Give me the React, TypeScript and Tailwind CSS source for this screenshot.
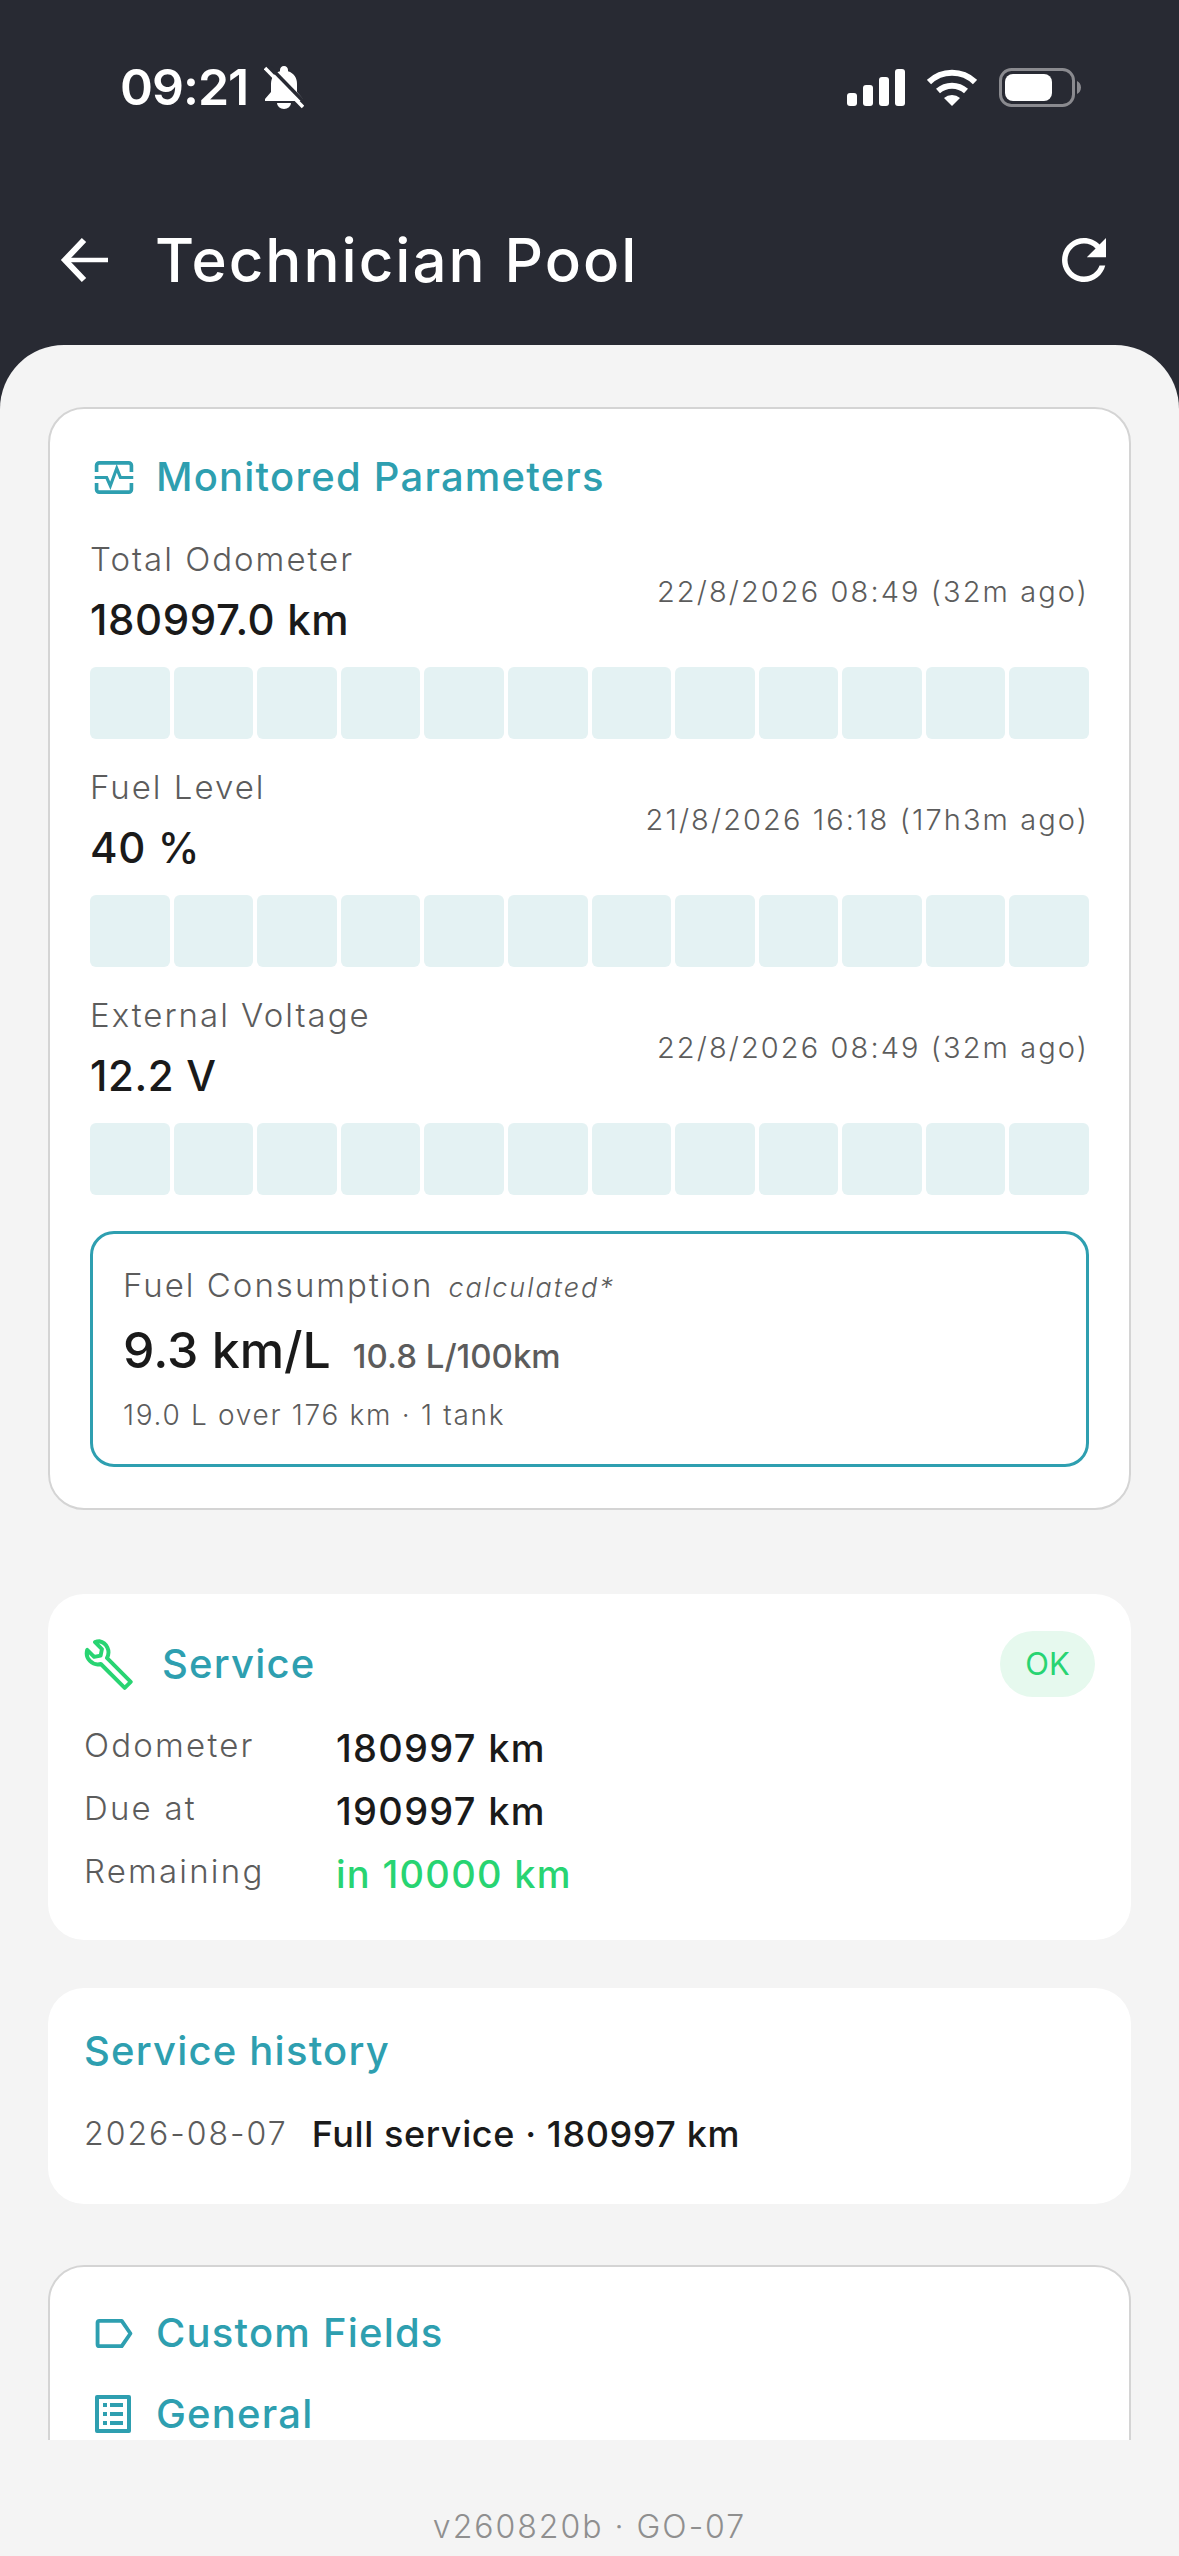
import { ReactNode } from "react";

const font = "font-['Inter','Liberation_Sans',sans-serif]";

const Bars = () => (
    <div className="grid grid-cols-12 gap-1 mt-[20px] h-[72px]">
        {Array.from({ length: 12 }).map((_, i) => (
            <div key={i} className="bg-[#e4f2f3] rounded-md" />
        ))}
    </div>
);

const Param = ({ label, value, time }: { label: string; value: string; time: string }) => (
    <div className="mb-[26px]">
        <div className="flex justify-between items-center">
            <div>
                <div className="text-[33px] leading-[44px] font-light text-[#5c5c5c] tracking-[2px]">{label}</div>
                <div className="text-[42px] leading-[54px] mt-[12px] font-medium text-[#1a1a1a] tracking-[0.6px]">{value}</div>
            </div>
            <div className="text-[29px] font-light text-[#5c5c5c] tracking-[2.1px]">{time}</div>
        </div>
        <Bars />
    </div>
);

const SectionTitle = ({ children }: { children: ReactNode }) => (
    <span className="text-[40px] font-medium text-[#2e9fb0] tracking-[1.2px]">{children}</span>
);

const Row = ({ label, children }: { label: string; children: ReactNode }) => (
    <div className="flex items-center h-[63px]">
        <div className="w-[252px] text-[33px] font-light text-[#5c5c5c] tracking-[2.2px] -mt-[6px]">{label}</div>
        {children}
    </div>
);

const ValueText = ({ children, green }: { children: ReactNode; green?: boolean }) => (
    <span className={`text-[38px] font-medium tracking-[1.3px] ${green ? "text-[#28d472]" : "text-[#1a1a1a]"}`}>{children}</span>
);

const App = () => {
    return (
        <div className={`${font} w-[1179px] h-[2556px] bg-[#282a33] flex flex-col overflow-hidden`}>
            {/* status bar + title */}
            <div className="h-[345px] shrink-0 text-white">
                <div className="flex justify-between items-center h-[174px] pl-[120px] pr-[98px]">
                    <div className="flex items-center gap-[16px]">
                        <span className="text-[50px] font-semibold tracking-[-1px]">09:21</span>
                        <svg width="40" height="43" viewBox="0 0 40 43" fill="white">
                            <path d="M20 0c2.5 0 4 1.8 4 4v1.2C30 7 33 12 33 18v8l6 7v2H1v-2l6-7v-8c0-6 3-11 9-12.800V4c0-2.200 1.500-4 4-4z" />
                            <path d="M13 37h14a7 6 0 0 1-14 0z" />
                            <path d="M4 -1 43 39" stroke="#282a33" strokeWidth="3.500" />
                            <path d="M1 2 39 41" stroke="white" strokeWidth="3.500" />
                        </svg>
                    </div>
                    <div className="flex items-center gap-[22px]">
                        <svg width="58" height="37" viewBox="0 0 58 37" fill="white">
                            <rect x="0" y="24" width="10" height="13" rx="3" />
                            <rect x="16" y="16" width="10" height="21" rx="3" />
                            <rect x="32" y="8" width="10" height="29" rx="3" />
                            <rect x="48" y="0" width="10" height="37" rx="3" />
                        </svg>
                        <svg width="50" height="37" viewBox="0 0 50 37" fill="none" stroke="white" strokeWidth="6">
                            <path d="M2 13a33 33 0 0 1 46 0" />
                            <path d="M11 22a21 21 0 0 1 28 0" />
                            <path d="M25 37 17 29a12 12 0 0 1 16 0z" fill="white" stroke="none" />
                        </svg>
                        <svg width="82" height="39" viewBox="0 0 82 39">
                            <rect x="1.500" y="1.500" width="73" height="36" rx="11" fill="none" stroke="#8a8a8f" strokeWidth="3" />
                            <rect x="6" y="6" width="47" height="27" rx="8" fill="white" />
                            <path d="M78 13c2 1 4 3 4 6.500s-2 5.500-4 6.500z" fill="#8a8a8f" />
                        </svg>
                    </div>
                </div>
                <div className="flex items-center mt-[31px] pl-[58px] pr-[62px] h-[110px]">
                    <svg width="52" height="52" viewBox="0 0 52 52" fill="none" stroke="white">
                        <path d="M50 26H8" strokeWidth="4.500" />
                        <path d="M26 6 7 26l19 20" strokeWidth="6" />
                    </svg>
                    <span className="ml-[45px] text-[60px] font-medium tracking-[2px]">Technician Pool</span>
                    <svg className="ml-auto" width="66" height="66" viewBox="0 0 24 24" fill="white">
                        <path d="M17.65 6.35C16.2 4.9 14.21 4 12 4c-4.42 0-7.99 3.58-7.99 8s3.57 8 7.99 8c3.73 0 6.84-2.55 7.73-6h-2.08c-.82 2.33-3.04 4-5.65 4-3.31 0-6-2.69-6-6s2.69-6 6-6c1.66 0 3.14.69 4.22 1.78L13 11h7V4l-2.35 2.35z" />
                    </svg>
                </div>
            </div>

            {/* content */}
            <div className="flex-1 bg-[#f4f4f4] rounded-t-[64px] flex flex-col">
                <div className="h-[2095px] shrink-0 overflow-hidden px-[48px] pt-[62px]">
                    <div className="bg-white border-2 border-[#d4d4d4] rounded-[36px] pt-[40px] px-[40px] pb-[41px]">
                        <div className="flex items-center gap-[22px] h-[56px] pl-[4px] mb-[32px]">
                            <svg width="40" height="33" viewBox="0 0 42 36" fill="none" stroke="#2e9fb0" strokeWidth="4">
                                <path d="M2 12V5a3 3 0 0 1 3-3h32a3 3 0 0 1 3 3v7M2 24v7a3 3 0 0 0 3 3h32a3 3 0 0 0 3-3v-7" />
                                <path d="M0 18h13l4 9 7-19 4 10h14" strokeWidth="3.400" />
                            </svg>
                            <SectionTitle>Monitored Parameters</SectionTitle>
                        </div>
                        <Param label="Total Odometer" value="180997.0 km" time="22/8/2026 08:49 (32m ago)" />
                        <Param label="Fuel Level" value="40 %" time="21/8/2026 16:18 (17h3m ago)" />
                        <Param label="External Voltage" value="12.2 V" time="22/8/2026 08:49 (32m ago)" />
                        <div className="border-[3px] border-[#2e9fb0] rounded-[24px] h-[236px] px-[30px] pt-[29px] mt-[36px]">
                            <div className="flex items-baseline gap-[15px] h-[44px]">
                                <span className="text-[33px] leading-[44px] font-light text-[#5c5c5c] tracking-[2px]">Fuel Consumption</span>
                                <span className="text-[27px] font-light italic text-[#5c5c5c] tracking-[2px]">calculated*</span>
                            </div>
                            <div className="flex items-baseline gap-[22px] mt-[12px] h-[62px]">
                                <span className="text-[50px] leading-[62px] font-medium text-[#1a1a1a]">9.3 km/L</span>
                                <span className="text-[33px] font-medium text-[#5c5c5c]">10.8 L/100km</span>
                            </div>
                            <div className="text-[28px] leading-[40px] font-light text-[#5c5c5c] mt-[14px] tracking-[1.7px]">19.0 L over 176 km · 1 tank</div>
                        </div>
                    </div>

                    <div className="bg-white rounded-[36px] h-[346px] mt-[84px] px-[36px] pt-[36px]">
                        <div className="flex items-center h-[68px] mb-[19px]">
                            <svg width="52" height="52" viewBox="0 0 24 24" fill="none" stroke="#28d472" strokeWidth="1.800" strokeLinejoin="round" className="-ml-[2px]">
                                <path d="M8 1.500a5 5 0 0 0-2 .4l3.200 3.200-.6 3-3 .6L2.400 5.500A5.200 5.200 0 0 0 8.700 12l11 11 2.800-2.800-11-11A5.200 5.200 0 0 0 8 1.500z" />
                            </svg>
                            <span className="ml-[28px]"><SectionTitle>Service</SectionTitle></span>
                            <span className="ml-auto w-[95px] h-[66px] rounded-full bg-[#e6f9ee] text-[#28d472] text-[31px] flex items-center justify-center">OK</span>
                        </div>
                        <Row label="Odometer"><ValueText>180997 km</ValueText></Row>
                        <Row label="Due at"><ValueText>190997 km</ValueText></Row>
                        <Row label="Remaining"><ValueText green>in 10000 km</ValueText></Row>
                    </div>

                    <div className="bg-white rounded-[36px] h-[216px] mt-[48px] px-[36px] pt-[33px]">
                        <SectionTitle>Service history</SectionTitle>
                        <div className="flex items-center gap-[24px] mt-[26px]">
                            <span className="text-[32px] font-light text-[#5c5c5c] tracking-[2px]">2026-08-07</span>
                            <span className="text-[36px] font-medium text-[#1a1a1a] tracking-[0.6px]">Full service · 180997 km</span>
                        </div>
                    </div>

                    <div className="bg-white border-2 border-[#d4d4d4] rounded-[36px] h-[300px] mt-[61px] px-[45px] pt-[38px]">
                        <div className="flex items-center gap-[23px] h-[56px]">
                            <svg width="38" height="29" viewBox="0 0 38 30" fill="none" stroke="#2e9fb0" strokeWidth="4" strokeLinejoin="round">
                                <path d="M2 4a2 2 0 0 1 2-2h23l9 13-9 13H4a2 2 0 0 1-2-2z" />
                            </svg>
                            <SectionTitle>Custom Fields</SectionTitle>
                        </div>
                        <div className="flex items-center gap-[23px] h-[56px] mt-[25px]">
                            <svg width="38" height="38" viewBox="0 0 38 38" fill="#2e9fb0">
                                <path fillRule="evenodd" d="M2 0h32a2 2 0 0 1 2 2v34a2 2 0 0 1-2 2H2a2 2 0 0 1-2-2V2a2 2 0 0 1 2-2zm2 4v30h28V4z" />
                                <rect x="8" y="8" width="4" height="4" /><rect x="15" y="8" width="13" height="4" />
                                <rect x="8" y="17" width="4" height="4" /><rect x="15" y="17" width="13" height="4" />
                                <rect x="8" y="26" width="4" height="4" /><rect x="15" y="26" width="13" height="4" />
                            </svg>
                            <SectionTitle>General</SectionTitle>
                        </div>
                    </div>
                </div>
                <div className="flex-1 flex items-center justify-center pt-[58px] text-[32px] font-light text-[#8f8f8f] tracking-[2px]">v260820b · GO-07</div>
            </div>
        </div>
    );
};

export default App;
